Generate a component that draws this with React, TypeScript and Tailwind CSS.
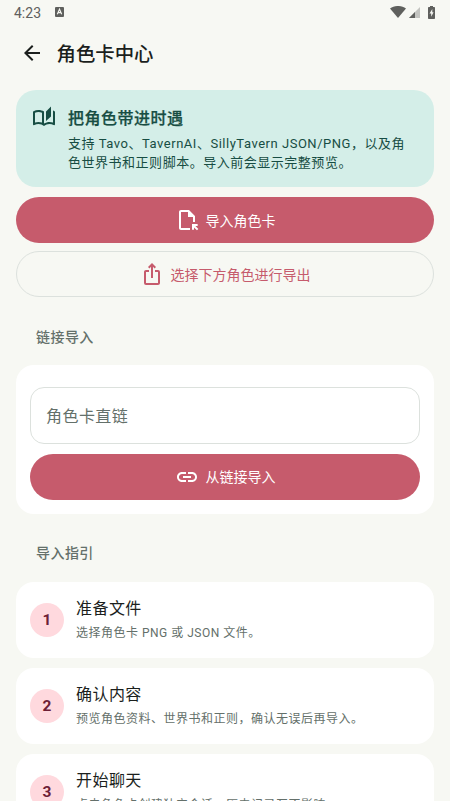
import React from 'react';
import { MdArrowBack, MdIosShare, MdLink, MdOutlineAutoStories, MdOutlineFileOpen } from 'react-icons/md';

const steps = [
    { title: '准备文件', text: '选择角色卡 PNG 或 JSON 文件。' },
    { title: '确认内容', text: '预览角色资料、世界书和正则，确认无误后再导入。' },
    { title: '开始聊天', text: '点击角色卡创建独立会话，历史记录互不影响。' },
];

const StatusBar = () => (
    <div className="h-6 pl-[14px] pr-[15px] flex items-center justify-between text-[#5f605d]">
        <div className="flex items-center gap-[14px]">
            <span className="pt-[2px] text-[14px] leading-6">4:23</span>
            <svg width="9" height="10" viewBox="0 0 9 10">
                <rect width="9" height="10" rx="1" fill="currentColor" />
                <path d="M2.3 7.2 4.5 2.2 6.7 7.2M3.2 5.6h2.6" fill="none" stroke="#f7f8f3" strokeWidth="1.1" />
            </svg>
        </div>
        <div className="flex items-center">
            <svg width="16" height="12" viewBox="0 0 16 12">
                <path d="M0 2.6C4.6-.9 11.4-.9 16 2.6L8 12z" fill="currentColor" />
            </svg>
            <svg className="ml-[3px]" width="11" height="11" viewBox="0 0 11 11">
                <path d="M11 0v11H0z" fill="#c3c4c0" />
                <path d="M6 5v6H0z" fill="currentColor" />
            </svg>
            <svg className="ml-[8px]" width="7" height="13" viewBox="0 0 7 13">
                <path d="M2 0h3v1h1.2q.8 0 .8.8v10.4q0 .8-.8.8H.8q-.8 0-.8-.8V1.8Q0 1 .8 1H2z" fill="currentColor" />
                <path d="M4.3 3 1.5 7.5H3.2V10.8L5.6 6.2H4.3z" fill="#f7f8f3" />
            </svg>
        </div>
    </div>
);

const SectionTitle = ({ text }: { text: string }) => (
    <h2 className="pl-5 text-[14px] leading-5 font-medium tracking-[0.45px] text-[#64706a]">{text}</h2>
);

const Step = ({ index, title, text }: { index: number, title: string, text: string }) => (
    <div className="h-[76px] px-[14px] flex items-center gap-3 rounded-[18px] bg-white">
        <div className="w-[34px] h-[34px] pt-[1px] shrink-0 flex items-center justify-center rounded-full bg-[#ffd9de] text-[#6d2037] text-[15.5px] font-bold">
            {index}
        </div>
        <div>
            <div className="text-[16px] leading-6 tracking-[0.45px] text-[#1b1f1d]">{title}</div>
            <div className="mt-[2px] text-[12px] leading-5 tracking-[0.5px] text-[#64706a] whitespace-nowrap">{text}</div>
        </div>
    </div>
);

const App: React.FC = () => {
    return (
        <div className="h-[801px] overflow-hidden bg-[#f7f8f3] font-[Roboto,'Noto_Sans_CJK_SC',sans-serif]">
            <StatusBar />

            <header className="h-[58px] pl-5 flex items-center gap-[12.5px] text-[#1b1f1d]">
                <MdArrowBack className="w-6 h-6" />
                <h1 className="pt-1 text-[19.4px] font-medium">角色卡中心</h1>
            </header>

            <main className="px-4 pt-2">
                {/* Intro */}
                <div className="h-[97px] pl-4 pr-4 pt-[17px] flex gap-3 rounded-[20px] bg-[#d4eee8] text-[#174d43]">
                    <MdOutlineAutoStories className="w-6 h-6 shrink-0 -mt-[1px]" />
                    <div>
                        <h2 className="text-[16px] leading-[23px] font-medium tracking-[0.48px] [-webkit-text-stroke:0.25px_#174d43]">把角色带进时遇</h2>
                        <p className="mt-1 text-[13px] leading-[19px] tracking-[0.52px] whitespace-nowrap">
                            支持 Tavo、TavernAI、SillyTavern JSON/PNG，以及角<br />色世界书和正则脚本。导入前会显示完整预览。
                        </p>
                    </div>
                </div>

                <button className="mt-[10px] w-full h-[46px] flex items-center justify-center gap-[7px] rounded-full bg-[#c65b6c] text-white text-[14px]">
                    <MdOutlineFileOpen className="w-6 h-6" />
                    <span className="pt-[2px]">导入角色卡</span>
                </button>
                <button className="mt-2 w-full h-[46px] flex items-center justify-center gap-[7px] rounded-full border border-[#dce1dd] text-[#c65b6c] text-[14px]">
                    <MdIosShare className="w-6 h-6" />
                    <span className="pt-[2px]">选择下方角色进行导出</span>
                </button>

                {/* Link import */}
                <div className="mt-[30px]">
                    <SectionTitle text="链接导入" />
                </div>
                <div className="mt-[18px] h-[149px] px-[14px] pt-[22px] rounded-[18px] bg-white">
                    <div className="h-[57px] px-[15px] pt-[2px] flex items-center rounded-[14px] border border-[#dce1dd] text-[16px] tracking-[0.45px] text-[#64706a]">
                        角色卡直链
                    </div>
                    <button className="mt-[10px] w-full h-[46px] flex items-center justify-center gap-[7px] rounded-full bg-[#c65b6c] text-white text-[14px]">
                        <MdLink className="w-6 h-6" />
                        从链接导入
                    </button>
                </div>

                {/* Guide */}
                <div className="mt-[29px]">
                    <SectionTitle text="导入指引" />
                </div>
                <div className="mt-[19px] flex flex-col gap-[10px]">
                    {steps.map((step, i) => (
                        <Step key={step.title} index={i + 1} title={step.title} text={step.text} />
                    ))}
                </div>
            </main>
        </div>
    );
};

export default App;
